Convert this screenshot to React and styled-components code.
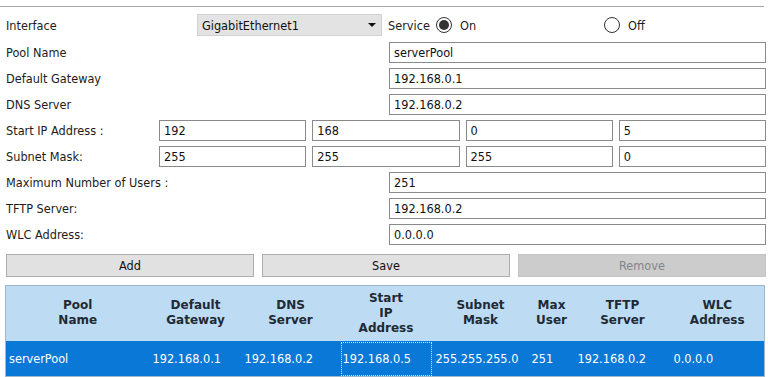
import React from "react";
import styled, { createGlobalStyle } from "styled-components";

const Global = createGlobalStyle`
  body {
    margin: 0;
    background: #ffffff;
    font-family: "DejaVu Sans Condensed", "DejaVu Sans", sans-serif;
    font-size: 12.6px;
    color: #1c1c1c;
  }
  * { box-sizing: border-box; }
`;

const Page = styled.div`
  width: 768px;
  height: 377px;
  overflow: hidden;
  padding: 6px 2px 0 6px;
`;

const Divider = styled.div`
  height: 1px;
  background: #a6a6a6;
  margin: 0 2px 0 -6px;
`;

const Form = styled.div`
  display: flex;
  flex-direction: column;
  gap: 5px;
  margin-top: 7px;
`;

const Row = styled.div`
  display: grid;
  grid-template-columns: ${({ cols }) => cols};
  column-gap: 6px;
  align-items: center;
  height: ${({ h }) => h || 21}px;
  margin-bottom: ${({ mb }) => mb || 0}px;
`;

const Label = styled.span`
  white-space: nowrap;
`;

const Field = styled.div`
  height: 100%;
  border: 1px solid #8a8a8a;
  background: #fff;
  padding: 0 4px;
  display: flex;
  align-items: center;
  color: #111;
`;

const Select = styled.div`
  height: 100%;
  background: #e3e3e3;
  border: 1px solid #d2d2d2;
  display: flex;
  align-items: center;
  justify-content: space-between;
  padding: 0 5px 0 4px;
  color: #111;
`;

const Arrow = styled.span`
  width: 0;
  height: 0;
  border-left: 4px solid transparent;
  border-right: 4px solid transparent;
  border-top: 4px solid #111;
`;

const ServiceGroup = styled.div`
  display: grid;
  grid-template-columns: 48px 168px 1fr;
  align-items: center;
`;

const Option = styled.label`
  display: flex;
  align-items: center;
  gap: 8px;
`;

const Radio = styled.span`
  width: 16px;
  height: 16px;
  border-radius: 50%;
  border: 1px solid #333;
  background: #fff;
  display: flex;
  align-items: center;
  justify-content: center;

  &::after {
    content: "";
    width: 10px;
    height: 10px;
    border-radius: 50%;
    background: ${({ checked }) => (checked ? "#333" : "transparent")};
  }
`;

const Buttons = styled.div`
  display: grid;
  grid-template-columns: repeat(3, 1fr);
  gap: 8px;
  margin-top: 9px;
`;

const Button = styled.div`
  height: 23px;
  display: flex;
  align-items: center;
  justify-content: center;
  background: ${({ disabled }) => (disabled ? "#cccccc" : "#e1e1e1")};
  border: 1px solid ${({ disabled }) => (disabled ? "#c4c4c4" : "#adadad")};
  color: ${({ disabled }) => (disabled ? "#858585" : "#111")};
`;

const Table = styled.table`
  margin-top: 8px;
  margin-left: -1px;
  width: 759px;
  border-collapse: collapse;
  table-layout: fixed;
  border: 1px solid #a0b8cc;
`;

const Th = styled.th`
  background: #bddcf3;
  height: 55px;
  font-family: "DejaVu Sans", sans-serif;
  font-size: 12px;
  font-weight: bold;
  line-height: 15px;
  color: #1e2a35;
  text-align: center;
  vertical-align: middle;
  padding: 0 1px;
`;

const Td = styled.td`
  background: #0a78d6;
  color: #ffffff;
  height: 36px;
  padding: 0 3px;
  white-space: nowrap;
  overflow: hidden;
  outline: ${({ focused }) => (focused ? "1px dotted #cfe6ff" : "none")};
  outline-offset: -2px;
`;

const columns = [
  ["Pool", "Name"],
  ["Default", "Gateway"],
  ["DNS", "Server"],
  ["Start", "IP", "Address"],
  ["Subnet", "Mask"],
  ["Max", "User"],
  ["TFTP", "Server"],
  ["WLC", "Address"],
];
const widths = [144, 92, 98, 93, 96, 46, 96, 94];
const row = [
  "serverPool",
  "192.168.0.1",
  "192.168.0.2",
  "192.168.0.5",
  "255.255.255.0",
  "251",
  "192.168.0.2",
  "0.0.0.0",
];

const FULL = "377px 1fr";
const SPLIT = "147px repeat(4, 1fr)";

export default function App() {
  return (
    <Page>
      <Global />
      <Divider />
      <Form>
        <Row cols="185px 185px 1fr" h={22} mb={1}>
          <Label>Interface</Label>
          <Select>
            GigabitEthernet1
            <Arrow />
          </Select>
          <ServiceGroup>
            <Label>Service</Label>
            <Option>
              <Radio checked />
              On
            </Option>
            <Option>
              <Radio />
              Off
            </Option>
          </ServiceGroup>
        </Row>
        <Row cols={FULL}>
          <Label>Pool Name</Label>
          <Field>serverPool</Field>
        </Row>
        <Row cols={FULL}>
          <Label>Default Gateway</Label>
          <Field>192.168.0.1</Field>
        </Row>
        <Row cols={FULL}>
          <Label>DNS Server</Label>
          <Field>192.168.0.2</Field>
        </Row>
        <Row cols={SPLIT}>
          <Label>Start IP Address :</Label>
          <Field>192</Field>
          <Field>168</Field>
          <Field>0</Field>
          <Field>5</Field>
        </Row>
        <Row cols={SPLIT}>
          <Label>Subnet Mask:</Label>
          <Field>255</Field>
          <Field>255</Field>
          <Field>255</Field>
          <Field>0</Field>
        </Row>
        <Row cols={FULL}>
          <Label>Maximum Number of Users :</Label>
          <Field>251</Field>
        </Row>
        <Row cols={FULL}>
          <Label>TFTP Server:</Label>
          <Field>192.168.0.2</Field>
        </Row>
        <Row cols={FULL}>
          <Label>WLC Address:</Label>
          <Field>0.0.0.0</Field>
        </Row>
      </Form>
      <Buttons>
        <Button>Add</Button>
        <Button>Save</Button>
        <Button disabled>Remove</Button>
      </Buttons>
      <Table>
        <colgroup>
          {widths.map((w, i) => (
            <col key={i} style={{ width: w }} />
          ))}
        </colgroup>
        <thead>
          <tr>
            {columns.map((lines, i) => (
              <Th key={i}>
                {lines.map((l, j) => (
                  <div key={j}>{l}</div>
                ))}
              </Th>
            ))}
          </tr>
        </thead>
        <tbody>
          <tr>
            {row.map((v, i) => (
              <Td key={i} focused={i === 3}>
                {v}
              </Td>
            ))}
          </tr>
        </tbody>
      </Table>
    </Page>
  );
}
